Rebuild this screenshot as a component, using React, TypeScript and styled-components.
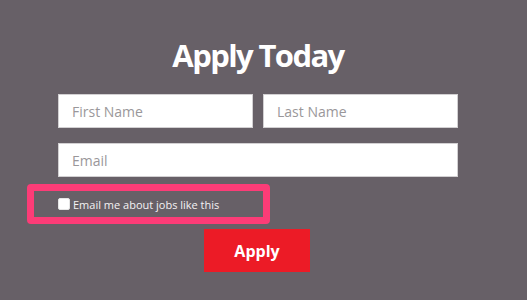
import React from "react";
import styled, { createGlobalStyle } from "styled-components";

const GlobalStyle = createGlobalStyle`
  html, body {
    margin: 0;
    padding: 0;
    background: #676067;
  }
  body {
    font-family: "Open Sans", "Liberation Sans", sans-serif;
  }
`;

const Page = styled.div`
  width: 527px;
  height: 300px;
  background: #676067;
  display: flex;
  flex-direction: column;
  align-items: center;
  overflow: hidden;
`;

const Form = styled.form`
  width: 400px;
  margin-left: -11px;
  display: flex;
  flex-direction: column;
`;

const Title = styled.h1`
  margin: 36px 0 0;
  height: 38px;
  line-height: 38px;
  font-size: 31px;
  font-weight: 700;
  letter-spacing: -1.6px;
  color: #ffffff;
  text-align: center;
`;

const Row = styled.div`
  display: flex;
  gap: 10px;
  margin-top: ${(p: { $top: number }) => p.$top}px;
`;

const Field = styled.input`
  flex: 1;
  min-width: 0;
  height: 34px;
  box-sizing: border-box;
  border: 1px solid #d2d0d2;
  background: #ffffff;
  padding: 0 13px;
  font-family: "Open Sans", "Liberation Sans", sans-serif;
  font-size: 14px;
  color: #333;
  outline: none;
  &::placeholder {
    color: #9a979a;
  }
`;

const Highlight = styled.label`
  margin: 7px 0 0 -31px;
  width: 243px;
  height: 40px;
  box-sizing: border-box;
  border: 7px solid #fc3c77;
  border-radius: 4px;
  padding-left: 24px;
  display: flex;
  align-items: center;
  gap: 3px;
  font-size: 11px;
  color: #f4f2f4;
  cursor: pointer;
`;

const Check = styled.input`
  appearance: none;
  margin: 0;
  width: 12px;
  height: 12px;
  border-radius: 2px;
  background: #ffffff;
  border: 1px solid #e6e6e6;
  box-sizing: border-box;
`;

const Submit = styled.button`
  align-self: center;
  margin: 5px 0 0 -2px;
  width: 106px;
  height: 43px;
  border: none;
  background: #ec1b26;
  color: #ffffff;
  font-family: "Open Sans", "Liberation Sans", sans-serif;
  font-size: 16px;
  font-weight: 700;
  cursor: pointer;
`;

const App = () => {
  return (
    <Page>
      <GlobalStyle />
      <Form onSubmit={(e) => e.preventDefault()}>
        <Title>Apply Today</Title>
        <Row $top={20}>
          <Field placeholder="First Name" />
          <Field placeholder="Last Name" />
        </Row>
        <Row $top={15}>
          <Field placeholder="Email" />
        </Row>
        <Highlight>
          <Check type="checkbox" />
          Email me about jobs like this
        </Highlight>
        <Submit type="submit">Apply</Submit>
      </Form>
    </Page>
  );
};

export default App;
